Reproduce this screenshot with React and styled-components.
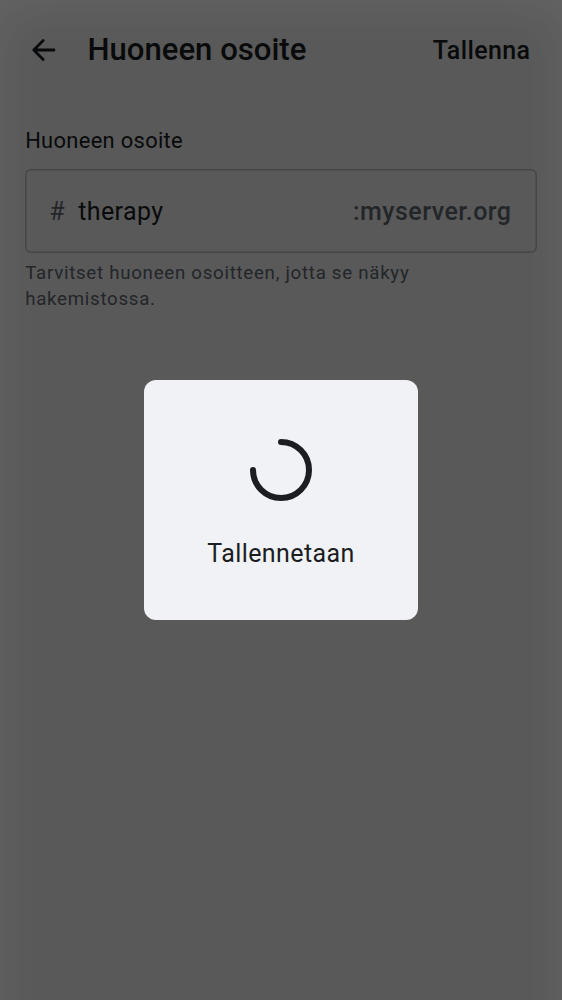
import React from "react";
import styled, { createGlobalStyle } from "styled-components";

const GlobalStyle = createGlobalStyle`
  *, *::before, *::after { box-sizing: border-box; }
  body { margin: 0; background: #ffffff; }
  button, input { font: inherit; color: inherit; letter-spacing: inherit; background: none; border: 0; padding: 0; margin: 0; outline: none; }
`;

const Screen = styled.div`
  position: relative;
  width: 100%;
  height: 1000px;
  overflow: hidden;
  background: #ffffff;
  color: #1b1d22;
  font-family: Roboto, "Liberation Sans", sans-serif;
`;

const TopBar = styled.header`
  display: flex;
  align-items: center;
  height: 100px;
  padding: 0 31.5px 0 31px;
`;

const BackButton = styled.button`
  display: flex;
  width: 26px;
  height: 26px;
`;

const Title = styled.h1`
  flex: 1;
  margin: 0 0 0 30.5px;
  font-size: 31.1px;
  line-height: 40px;
  font-weight: 500;
`;

const SaveButton = styled.button`
  padding-top: 1px;
  font-size: 25px;
  line-height: 36px;
  font-weight: 500;
  letter-spacing: 0.4px;
`;

const Form = styled.main`
  display: flex;
  flex-direction: column;
  padding: 25px 25px 0;
`;

const Label = styled.label`
  padding-left: 0.2px;
  font-size: 21.9px;
  line-height: 32px;
  letter-spacing: 0.32px;
`;

const Field = styled.div`
  display: flex;
  align-items: center;
  height: 84px;
  margin-top: 12px;
  padding: 0 25.5px 0 24.2px;
  border-radius: 6px;
  box-shadow: inset 0 0 0 1.5px #c2c5cc;
  font-size: 25px;
  letter-spacing: 0.4px;
`;

const Affix = styled.span`
  color: #656d77;
  font-weight: ${(p) => p.$weight || 400};
  letter-spacing: ${(p) => p.$spacing || "0.4px"};
`;

const AddressInput = styled.input`
  flex: 1;
  min-width: 0;
  height: 40px;
  margin-left: 13.2px;
`;

const Hint = styled.p`
  margin: 7px 0 0;
  padding-left: 0.2px;
  max-width: 420px;
  color: #656d77;
  font-size: 18.7px;
  line-height: 26px;
  letter-spacing: 0.72px;
`;

const Scrim = styled.div`
  position: absolute;
  inset: 0;
  display: flex;
  align-items: center;
  justify-content: center;
  background: rgba(0, 0, 0, 0.651);

  &::before {
    content: "";
    position: absolute;
    inset: 0 0 -60px;
    box-shadow: inset 0 8px 50px rgba(255, 255, 255, 0.07);
  }
`;

const Dialog = styled.div`
  display: flex;
  flex-direction: column;
  align-items: center;
  width: 274px;
  height: 240px;
  padding-top: 59px;
  border-radius: 12px;
  background: #f0f2f6;
`;

const Status = styled.div`
  margin-top: 35px;
  font-size: 25px;
  line-height: 36px;
  letter-spacing: 0.4px;
`;

export default function App() {
  return (
    <>
      <GlobalStyle />
      <Screen>
        <TopBar>
          <BackButton aria-label="Takaisin">
            <svg width="26" height="26" viewBox="0 0 26 26" fill="none" stroke="currentColor" strokeWidth="2.8" strokeLinecap="round" strokeLinejoin="round">
              <path d="M12.2 3.6 2.8 13l9.4 9.4M2.8 13h20.2" />
            </svg>
          </BackButton>
          <Title>Huoneen osoite</Title>
          <SaveButton>Tallenna</SaveButton>
        </TopBar>
        <Form>
          <Label htmlFor="address">Huoneen osoite</Label>
          <Field>
            <Affix>#</Affix>
            <AddressInput id="address" defaultValue="therapy" />
            <Affix $weight={500} $spacing="0.45px">:myserver.org</Affix>
          </Field>
          <Hint>Tarvitset huoneen osoitteen, jotta se näkyy hakemistossa.</Hint>
        </Form>
        <Scrim>
          <Dialog role="dialog">
            <svg width="62" height="62" viewBox="0 0 62 62" fill="none" stroke="#1b1d22" strokeWidth="6" strokeLinecap="round">
              <path d="M31 3A28 28 0 1 1 3 31" />
            </svg>
            <Status>Tallennetaan</Status>
          </Dialog>
        </Scrim>
      </Screen>
    </>
  );
}
